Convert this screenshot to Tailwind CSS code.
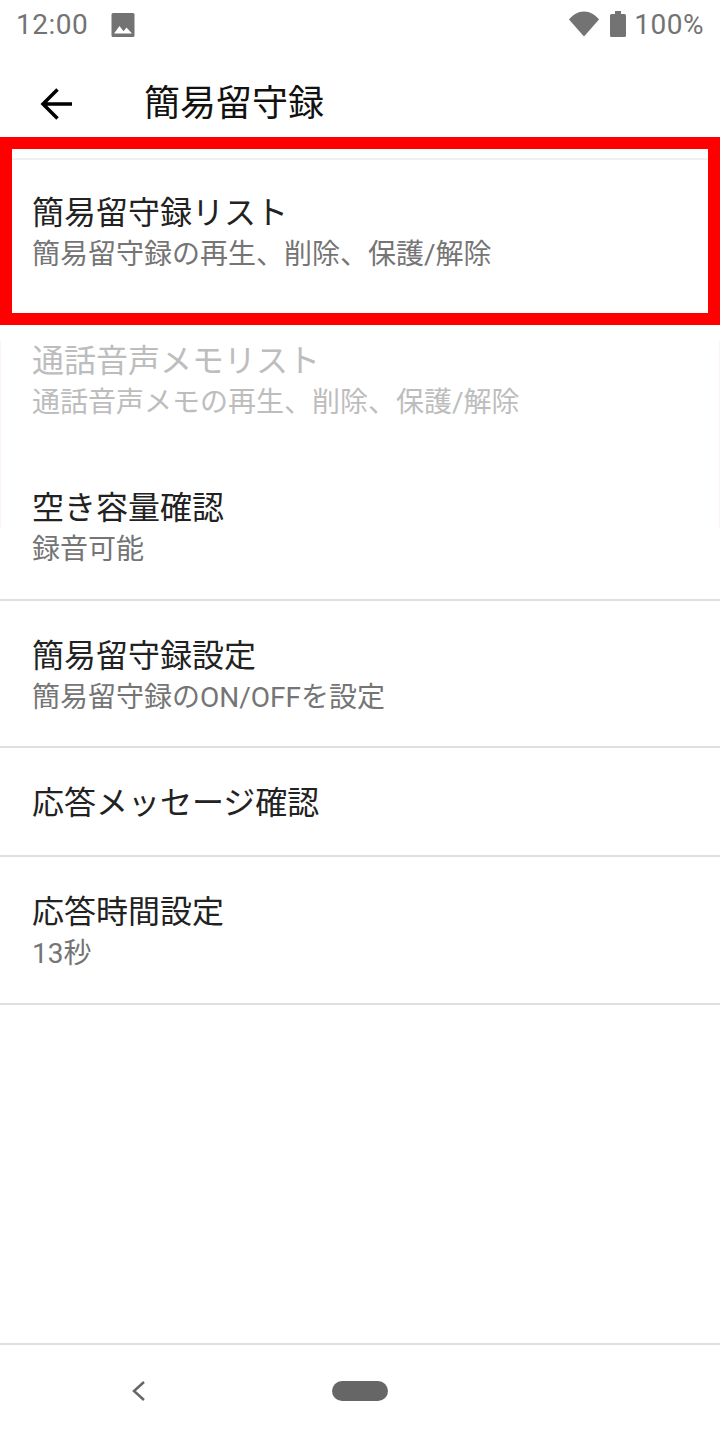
<!DOCTYPE html>
<html lang="ja">
<head>
<meta charset="utf-8">
<script src="https://cdn.jsdelivr.net/npm/@tailwindcss/browser@4"></script>
</head>
<body class="bg-white">
<div class="relative w-[720px] h-[1440px] flex flex-col overflow-hidden bg-white font-['Roboto','Noto_Sans_CJK_JP',sans-serif]">
  <div class="absolute left-0 top-[341px] w-[1px] h-[187px] bg-[#fff2f2]"></div>
  <div class="absolute right-0 top-[341px] w-[1px] h-[187px] bg-[#fff2f2]"></div>
  <div class="h-[48px] flex items-center pl-[16px] pr-[16px] pt-[1px] text-[#737373] text-[28px] leading-[48px] shrink-0">
    <span class="tracking-[0.5px]">12:00</span>
    <svg class="ml-[23px]" width="24" height="24" viewBox="0 0 24 24"><path fill="#737373" d="M2 0h20a1.500 1.500 0 0 1 1.500 1.500v21a1.500 1.500 0 0 1-1.500 1.500H2a1.500 1.500 0 0 1-1.500-1.500v-21A1.500 1.500 0 0 1 2 0z"/><path fill="#fff" d="M3 20.500l5.500-7.500 4 5.200 3-3.700 5.500 6z"/></svg>
    <div class="ml-auto flex items-center -translate-y-[1px]">
      <svg width="32" height="26" viewBox="0 0 32 26"><path fill="#737373" d="M1 8.500C5 3.500 10 .5 16 .5s11 3 15 8L16 25.500z"/></svg>
      <svg class="ml-[10px]" width="16" height="26" viewBox="0 0 16 26"><path fill="#737373" d="M5 0h6v3h3.500a1.500 1.500 0 0 1 1.500 1.500v20a1.500 1.500 0 0 1-1.500 1.500h-13A1.500 1.500 0 0 1 0 24.500v-20A1.500 1.500 0 0 1 1.500 3H5z"/></svg>
      <span class="ml-[8px] tracking-[0.5px] translate-y-[1px]">100%</span>
    </div>
  </div>
  <div class="h-[89px] flex items-center shrink-0 pt-[22px]">
    <svg class="ml-[40px]" width="32" height="32" viewBox="0 0 32 32"><path fill="none" stroke="#000" stroke-width="3.500" d="M32 16H3M17.500 1.500L3 16l14.500 14.500"/></svg>
    <span class="ml-[72px] text-[36px] leading-[48px] text-[#111]">簡易留守録</span>
  </div>
  <div class="h-[188px] border-[12px] border-[#ff0000] shrink-0 flex flex-col">
    <div class="h-[11px] border-b-2 border-[#f0f0f0] shrink-0"></div>
    <div class="flex-1 pl-[20px] pt-[31px]">
      <div class="text-[32px] leading-[44px] text-[#222]">簡易留守録リスト</div>
      <div class="text-[28px] leading-[40px] text-[#757575]">簡易留守録の再生、削除、保護/解除</div>
    </div>
  </div>
  <div class="h-[128px] pl-[32px] pt-[14px] shrink-0">
    <div class="text-[32px] leading-[44px] text-[#bdbdbd]">通話音声メモリスト</div>
    <div class="text-[28px] leading-[40px] text-[#bdbdbd]">通話音声メモの再生、削除、保護/解除</div>
  </div>
  <div class="h-[148px] pl-[32px] pt-[33px] border-b-2 border-[#e0e0e0] shrink-0">
    <div class="text-[32px] leading-[44px] text-[#222]">空き容量確認</div>
    <div class="text-[28px] leading-[40px] text-[#757575]">録音可能</div>
  </div>
  <div class="h-[147px] pl-[32px] pt-[33px] border-b-2 border-[#e0e0e0] shrink-0">
    <div class="text-[32px] leading-[44px] text-[#222]">簡易留守録設定</div>
    <div class="text-[28px] leading-[40px] text-[#757575]">簡易留守録のON/OFFを設定</div>
  </div>
  <div class="h-[109px] pl-[32px] pt-[2px] flex items-center border-b-2 border-[#e0e0e0] shrink-0">
    <div class="text-[32px] leading-[44px] text-[#222]">応答メッセージ確認</div>
  </div>
  <div class="h-[148px] pl-[32px] pt-[33px] border-b-2 border-[#e0e0e0] shrink-0">
    <div class="text-[32px] leading-[44px] text-[#222]">応答時間設定</div>
    <div class="text-[28px] leading-[40px] text-[#757575]">13秒</div>
  </div>
  <div class="flex-1"></div>
  <div class="h-[97px] border-t-2 border-[#e0e0e0] relative shrink-0">
    <svg class="absolute left-[130px] top-[35px]" width="16" height="22" viewBox="0 0 16 22"><path fill="none" stroke="#666" stroke-width="2.500" d="M14 2L4 11l10 9"/></svg>
    <div class="absolute left-[332px] top-[36px] w-[56px] h-[20px] rounded-full bg-[#666]"></div>
  </div>
</div>
</body>
</html>
